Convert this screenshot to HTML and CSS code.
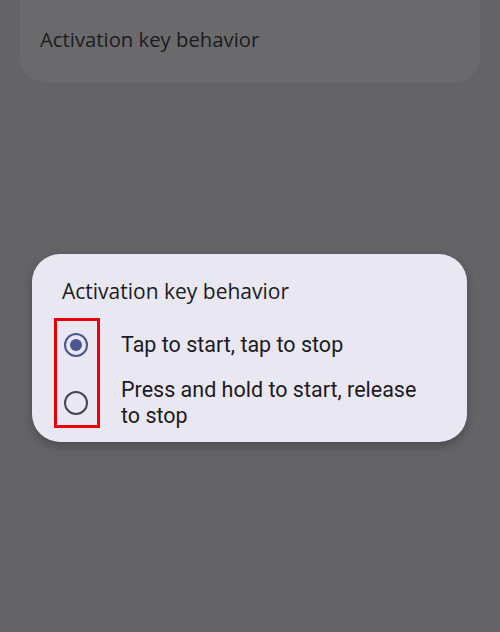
FILE: index.html
```html
<!DOCTYPE html>
<html>
<head>
<meta charset="utf-8">
<link rel="stylesheet" href="styles.css">
</head>
<body>
<div class="screen">
  <div class="pref-card">
    <div class="pref-title">Activation key behavior</div>
  </div>
  <div class="dialog">
    <div class="dialog-title">Activation key behavior</div>
    <div class="options">
      <div class="option">
        <span class="radio checked"><span class="dot"></span></span>
        <span class="label">Tap to start, tap to stop</span>
      </div>
      <div class="option">
        <span class="radio"></span>
        <span class="label">Press and hold to start, release to stop</span>
      </div>
    </div>
    <div class="highlight"></div>
  </div>
</div>
</body>
</html>
```
FILE: styles.css
```css
html, body {
  margin: 0;
  padding: 0;
}
body {
  background: #646466;
  width: 500px;
  height: 632px;
  overflow: hidden;
  font-family: Roboto, "Liberation Sans", sans-serif;
}
.screen {
  display: flex;
  flex-direction: column;
}
.pref-card {
  margin: 0 20px;
  height: 82px;
  background: #6a6a6c;
  border-radius: 0 0 24px 24px;
  box-sizing: border-box;
  padding: 27px 0 0 20px;
}
.pref-title {
  font-family: "Open Sans", Roboto, sans-serif;
  font-size: 20.3px;
  color: #1b1b1d;
  line-height: 24px;
}
.dialog {
  position: relative;
  margin: 172px 0 0 32px;
  width: 435px;
  height: 188px;
  box-sizing: border-box;
  background: #e9e7f1;
  border-radius: 28px;
  box-shadow: 0 4px 10px rgba(0,0,0,0.25);
  padding: 24px 30px 0 30px;
}
.dialog-title {
  font-family: "Open Sans", Roboto, sans-serif;
  font-size: 21px;
  line-height: 26px;
  color: #1c1b1f;
}
.options {
  display: flex;
  flex-direction: column;
  margin-top: 28px;
  gap: 19px;
}
.option {
  display: flex;
  align-items: center;
}
.radio {
  flex: none;
  box-sizing: border-box;
  width: 24px;
  height: 24px;
  margin: 0 0 0 2px;
  border: 2px solid #49454f;
  border-radius: 50%;
  display: flex;
  align-items: center;
  justify-content: center;
}
.radio.checked {
  border-color: #4c5791;
}
.dot {
  width: 12px;
  height: 12px;
  border-radius: 50%;
  background: #4c5791;
}
.label {
  margin-left: 33px;
  font-size: 21.5px;
  line-height: 26px;
  color: #1c1b1f;
  width: 310px;
}
.highlight {
  position: absolute;
  left: 22px;
  top: 64px;
  width: 46px;
  height: 110px;
  box-sizing: border-box;
  border: 3px solid #e8000b;
}
```
